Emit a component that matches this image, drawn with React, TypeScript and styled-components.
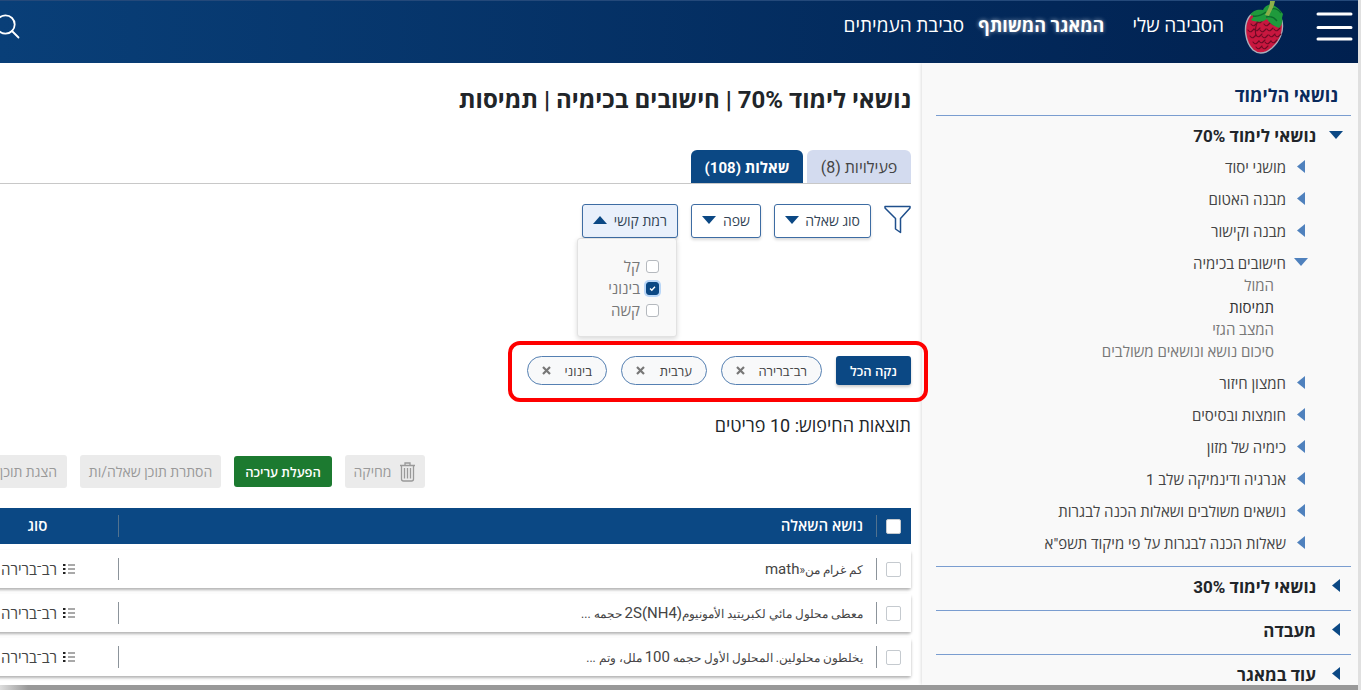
import React from 'react';
import styled, { createGlobalStyle, css } from 'styled-components';

const navy = '#0b4884';
const lineBlue = '#7a9dd0';

const GlobalStyle = createGlobalStyle`
  *, *::before, *::after { box-sizing: border-box; }
  body {
    margin: 0;
    background: #fff;
    color: #212529;
    font-family: Roboto, 'Open Sans', 'Noto Sans', 'Liberation Sans', sans-serif;
    font-size: 14px;
  }
  button, input { font: inherit; margin: 0; }
  h1, h2, p, ul { margin: 0; padding: 0; }
  ul { list-style: none; }
`;

const Frame = styled.div`
  height: 100vh;
  display: flex;
  flex-direction: column;
  overflow: hidden;
  border-right: 3px solid #e0e0e0;
  background: #fff;
`;

const BottomEdge = styled.div`
  flex: none;
  height: 5px;
  margin-right: -3px;
  background: linear-gradient(to right, #ddd, #999 28px);
`;

const Header = styled.header`
  flex: none;
  height: 63px;
  display: flex;
  align-items: flex-start;
  padding-inline-start: 5px;
  background: linear-gradient(to left, #00204f, #093f78);
  border-top: 1px solid #24497a;
`;

const IconButton = styled.button`
  display: block;
  border: 0;
  padding: 0;
  background: none;
  svg { display: block; }
`;

const MenuButton = styled(IconButton)`
  margin-top: 10px;
`;

const SearchButton = styled(IconButton)`
  margin-top: 13px;
  margin-inline-start: auto;
  margin-inline-end: -6px;
`;

const LogoLink = styled.a`
  display: block;
  margin-inline-start: 30px;
  svg { display: block; }
`;

const Nav = styled.nav`
  display: flex;
  margin-top: 11px;
  margin-inline-start: 20px;
`;

const NavLink = styled.a<{ $current?: boolean; $gap?: number }>`
  color: #fff;
  text-decoration: none;
  font-size: 19px;
  line-height: 28px;
  white-space: nowrap;
  margin-inline-end: ${p => p.$gap ?? 0}px;
  ${p => p.$current && css`
    font-size: 18px;
    font-weight: 700;
    text-shadow: 0 0 4px rgba(255, 255, 255, 0.6);
  `}
`;

const Body = styled.div`
  flex: 1;
  min-height: 0;
  display: grid;
  grid-template-columns: 436px minmax(0, 1fr);
  overflow: hidden;
`;

const Sidebar = styled.aside`
  padding: 16px 7px 0 14px;
  background: #f9f9f9;
  box-shadow: 0 0 4px rgba(0, 0, 0, 0.2);
  overflow: hidden;
`;

const SideTitle = styled.h2`
  padding: 1px 13px 3px;
  font-size: 18px;
  line-height: 32px;
  font-weight: 700;
  color: #0a2a5c;
`;

const Group = styled.section`
  border-top: 1px solid ${lineBlue};
`;

const GroupButton = styled.button`
  display: flex;
  align-items: center;
  gap: 13px;
  width: 100%;
  height: 43px;
  padding: 0 8px 4px;
  border: 0;
  background: none;
  font-size: 17px;
  font-weight: 700;
  color: #212529;
`;

const ArrowBox = styled.span`
  flex: none;
  display: flex;
  justify-content: center;
  width: 14px;
  padding-bottom: 2px;
  svg { display: block; }
`;

const TopicList = styled.ul`
  margin-top: -8px;
  padding: 0 43px 7px 0;
`;

const TopicButton = styled.button`
  display: flex;
  align-items: center;
  gap: 8px;
  height: 32px;
  padding: 0;
  border: 0;
  background: none;
  font-size: 15px;
  white-space: nowrap;
  color: #444;
`;

const SubList = styled.ul`
  margin: -4px 34px 4px 0;
`;

const SubItem = styled.li`
  line-height: 22px;
  font-size: 15px;
`;

const SubLink = styled.a<{ $current?: boolean }>`
  color: ${p => (p.$current ? '#333' : '#777')};
  text-decoration: none;
`;

const Main = styled.main`
  min-width: 0;
  padding: 21px 11px 0 0;
`;

const Title = styled.h1`
  font-size: 24px;
  line-height: 32px;
  font-weight: 700;
`;

const Tabs = styled.div`
  display: flex;
  gap: 4px;
  margin-top: 34px;
  border-bottom: 1px solid #c8c8c8;
`;

const Tab = styled.button<{ $active?: boolean; $w: number }>`
  min-width: ${p => p.$w}px;
  height: 33px;
  padding: 0;
  border: 0;
  border-radius: 6px 6px 0 0;
  font-size: ${p => (p.$active ? 15 : 16)}px;
  white-space: nowrap;
  color: ${p => (p.$active ? '#fff' : '#444')};
  font-weight: ${p => (p.$active ? 700 : 400)};
  background: ${p => (p.$active ? navy : '#d3dbef')};
`;

const Filters = styled.div`
  display: flex;
  align-items: flex-start;
  gap: 13px;
  margin-top: 20px;
`;

const FilterSlot = styled.div`
  position: relative;
`;

const FilterButton = styled.button<{ $open?: boolean; $w: number }>`
  display: flex;
  align-items: center;
  justify-content: space-between;
  min-width: ${p => p.$w}px;
  height: 34px;
  padding: 0 10px 2px;
  border: 1px solid #3d6ca3;
  border-radius: 3px;
  font-size: 14px;
  white-space: nowrap;
  color: #345;
  background: ${p => (p.$open ? '#e9f0fb' : '#fff')};
  box-shadow: 0 2px 3px rgba(0, 0, 0, 0.15);
`;

const Menu = styled.div`
  position: absolute;
  top: 100%;
  right: 1px;
  width: 100px;
  padding: 16px 17px 15px;
  background: #f9f9f9;
  border: 1px solid #e2e2e2;
  border-radius: 3px;
  box-shadow: 0 2px 5px rgba(0, 0, 0, 0.15);
`;

const Option = styled.label`
  display: flex;
  align-items: center;
  gap: 6px;
  height: 22px;
  font-size: 15px;
  color: #777;
`;

const CheckBox = styled.input<{ $round?: boolean }>`
  appearance: none;
  flex: none;
  display: block;
  width: ${p => (p.$round ? 13 : 15)}px;
  height: ${p => (p.$round ? 13 : 15)}px;
  border: 1px solid ${p => (p.$round ? '#b5b9be' : '#c5cacf')};
  border-radius: ${p => (p.$round ? 3 : 2)}px;
  background: #fff;
  &:checked {
    border-color: ${navy};
    background: ${navy} url("data:image/svg+xml,%3Csvg xmlns='http://www.w3.org/2000/svg' viewBox='0 0 8 8'%3E%3Cpath fill='none' stroke='%23fff' stroke-width='1.6' d='M1.2 4l2 2 3.6-4'/%3E%3C/svg%3E") center / 7px no-repeat;
    box-shadow: 0 0 0 2px #b9d6f7;
  }
`;

const Chips = styled.div`
  position: relative;
  display: flex;
  gap: 14px;
  width: fit-content;
  margin-top: 118px;
  &::after {
    content: '';
    position: absolute;
    inset: -15px -17px -17px -19px;
    border: 4px solid #fe0000;
    border-radius: 12px;
    pointer-events: none;
  }
`;

const ClearButton = styled.button`
  width: 75px;
  height: 29px;
  padding: 0;
  border: 0;
  border-radius: 3px;
  background: ${navy};
  color: #fff;
  font-size: 13px;
  font-weight: 600;
  box-shadow: 0 2px 3px rgba(0, 0, 0, 0.2);
`;

const Chip = styled.button<{ $w: number }>`
  display: flex;
  align-items: center;
  justify-content: space-between;
  min-width: ${p => p.$w}px;
  height: 29px;
  padding: 0 14px;
  border: 1px solid #5580b2;
  border-radius: 15px;
  background: #f8f9fa;
  color: #444;
  font-size: 13px;
  white-space: nowrap;
`;

const Results = styled.p`
  margin-top: 29px;
  font-size: 18px;
  line-height: 24px;
`;

const Toolbar = styled.div`
  display: flex;
  justify-content: flex-end;
  align-items: center;
  gap: 13px;
  margin-top: 17px;
  margin-inline-end: -69px;
`;

const ToolButton = styled.button<{ $primary?: boolean; $start?: boolean; $w: number }>`
  flex: none;
  display: flex;
  align-items: center;
  justify-content: ${p => (p.$start ? 'flex-start' : 'center')};
  gap: 8px;
  width: ${p => p.$w}px;
  height: ${p => (p.$primary ? 31 : 33)}px;
  padding: 0 ${p => (p.$start ? 10 : 0)}px;
  border: 0;
  border-radius: 3px;
  font-size: ${p => (p.$primary ? 13 : 14)}px;
  white-space: nowrap;
  color: ${p => (p.$primary ? '#fff' : '#999')};
  font-weight: ${p => (p.$primary ? 600 : 400)};
  background: ${p => (p.$primary ? '#1c7a30' : '#ebebeb')};
`;

const Table = styled.table`
  width: calc(100% + 43px);
  margin-top: 14px;
  table-layout: fixed;
  border-collapse: separate;
  border-spacing: 0 6px;
  th, td { padding: 0; text-align: start; }
`;

const HeadRow = styled.tr`
  height: 36px;
  color: #fff;
  background: ${navy};
`;

const Row = styled.tr`
  height: 38px;
  color: #444;
  background: #fff;
  border-radius: 3px;
  box-shadow: 0 2px 3px rgba(0, 0, 0, 0.3);
`;

const Cell = styled.div<{ $head?: boolean; $center?: boolean }>`
  display: flex;
  align-items: center;
  justify-content: ${p => (p.$center ? 'center' : 'flex-start')};
  height: 22px;
  padding-inline-start: ${p => (p.$center ? 0 : 13)}px;
  padding-bottom: ${p => (p.$head ? 2 : 0)}px;
  border-inline-start: 1px solid ${p => (p.$head ? '#52728f' : '#8c949b')};
  font-size: 15px;
  font-weight: ${p => (p.$head ? 600 : 400)};
  white-space: nowrap;
`;

const Question = styled.span`
  font-size: 12px;
`;

const Latin = styled.span`
  font-size: 15px;
`;

const CheckCell = styled.div`
  padding-inline-start: 10px;
`;

const Kind = styled.div`
  display: flex;
  align-items: center;
  gap: 6px;
  height: 22px;
  padding-inline-start: 43px;
  border-inline-start: 1px solid #8c949b;
  font-size: 15px;
  white-space: nowrap;
`;

function Arrow({ dir, color }: { dir: 'left' | 'down' | 'up'; color: string }) {
  if (dir === 'left') {
    return <svg width="8" height="13" viewBox="0 0 8 13"><path d="M8 0v13L0 6.500z" fill={color} /></svg>;
  }
  return (
    <svg width="14" height="8" viewBox="0 0 14 8">
      <path d={dir === 'down' ? 'M0 0h14L7 8z' : 'M0 8h14L7 0z'} fill={color} />
    </svg>
  );
}

const seeds: [number, number][] = [
  [11, 25], [17, 22], [24, 25], [31, 24], [8, 31], [14, 30], [20, 31], [27, 30], [34, 30],
  [10, 37], [16, 36], [22, 37], [29, 36], [35, 36], [13, 43], [19, 42], [25, 43], [31, 42],
  [16, 48], [22, 48],
];

function Raspberry() {
  return (
    <svg width="42" height="54" viewBox="0 0 42 54">
      <path d="M5 16C-1 25 1 41 9 49c6 5 13 3 19-2 8-7 12-17 10-27-3-9-28-13-33-4z" fill="#c8173f" stroke="#a9aebb" strokeWidth="1.400" />
      <g fill="none" stroke="#6d0b25" strokeWidth="1.100" strokeLinecap="round">
        {seeds.map(([x, y]) => (
          <path key={`${x}-${y}`} d={`M${x - 4} ${y - 2}q2 3 4 1t2-2`} />
        ))}
        <path d="M15 18q-5 8-3 17" />
      </g>
      <path d="M6 14c3-5 8-6 13-5 1-3 4-5 8-6 4 2 8 4 12 10l-1 4c1 3 0 7-3 10-5-2-9-4-12-9-5 4-12 3-16 1l3-4z" fill="#1f9a3c" />
      <path d="M22 16c4-1 8 0 11 4M9 15c5 1 9-1 13-4M27 8c4-1 7 0 10 4" fill="none" stroke="#0b6a2b" strokeWidth="1.300" />
      <path d="M21 14c2-4 5-8 5-14h5c-1 6-4 10-6 15z" fill="#8cae4a" />
    </svg>
  );
}

function Funnel() {
  return (
    <svg width="27" height="30" viewBox="0 0 27 30" fill="none" stroke="#1f4f8c" strokeWidth="1.500" strokeLinejoin="round">
      <path d="M1 2.500h25v1.500L16.500 14.500v14l-5-3.500V14.500L1 4z" />
    </svg>
  );
}

function Trash() {
  return (
    <svg width="17" height="20" viewBox="0 0 17 20" fill="none" stroke="#999" strokeWidth="1.300">
      <path d="M1 3.500h15M6 3V1h5v2M2.500 3.500V17q0 2 2 2h8q2 0 2-2V3.500M5.500 6v10.500M8.500 6v10.500M11.500 6v10.500" />
    </svg>
  );
}

function ListIcon() {
  return (
    <svg width="12" height="12" viewBox="0 0 12 12">
      <path d="M5 2h7M5 6h7M5 10h7" stroke="#555" strokeWidth="1.200" />
      <path d="M0 1h2.500v2H0zM0 5h2.500v2H0zM0 9h2.500v2H0z" fill="#222" />
    </svg>
  );
}

function Cross() {
  return (
    <svg width="9" height="9" viewBox="0 0 9 9" stroke="#777" strokeWidth="2.200">
      <path d="M1 1l7 7M8 1L1 8" />
    </svg>
  );
}

type Topic = { name: string; subs?: string[] };

const topics: Topic[] = [
  { name: 'מושגי יסוד' },
  { name: 'מבנה האטום' },
  { name: 'מבנה וקישור' },
  { name: 'חישובים בכימיה', subs: ['המול', 'תמיסות', 'המצב הגזי', 'סיכום נושא ונושאים משולבים'] },
  { name: 'חמצון חיזור' },
  { name: 'חומצות ובסיסים' },
  { name: 'כימיה של מזון' },
  { name: 'אנרגיה ודינמיקה שלב 1' },
  { name: 'נושאים משולבים ושאלות הכנה לבגרות' },
  { name: 'שאלות הכנה לבגרות על פי מיקוד תשפ"א' },
];

const otherGroups = ['נושאי לימוד 30%', 'מעבדה', 'עוד במאגר'];

const levels = ['קל', 'בינוני', 'קשה'];

const chips = [
  { name: 'רב־ברירה', w: 101 },
  { name: 'ערבית', w: 86 },
  { name: 'בינוני', w: 80 },
];

const questions = [
  { id: 'q1', label: 'كم غرام من', text: <>كم غرام من«<Latin>math</Latin></> },
  { id: 'q2', label: 'معطى محلول مائي', text: <>معطى محلول مائي لكبريتيد الأمونيوم<Latin>(NH4)2S</Latin> حجمه ...</> },
  { id: 'q3', label: 'يخلطون محلولين', text: <>يخلطون محلولين. المحلول الأول حجمه <Latin>100</Latin> ملل، وتم ...</> },
];

export default function App() {
  return (
    <>
      <GlobalStyle />
      <Frame dir="rtl" lang="he">
        <Header>
          <MenuButton type="button" aria-label="תפריט">
            <svg width="37" height="32" viewBox="0 0 37 32" stroke="#fff" strokeWidth="3" strokeLinecap="round">
              <path d="M2 3h33M2 16.500h33M2 28h33" />
            </svg>
          </MenuButton>
          <LogoLink href="#" aria-label="דף הבית"><Raspberry /></LogoLink>
          <Nav>
            <NavLink href="#" $gap={28}>הסביבה שלי</NavLink>
            <NavLink href="#" $gap={14} $current>המאגר המשותף</NavLink>
            <NavLink href="#">סביבת העמיתים</NavLink>
          </Nav>
          <SearchButton type="button" aria-label="חיפוש">
            <svg width="26" height="26" viewBox="0 0 26 26" fill="none" stroke="#fff" strokeWidth="1.800" strokeLinecap="round">
              <circle cx="11.500" cy="10.500" r="9.200" />
              <path d="M18 17l6.500 6.500" />
            </svg>
          </SearchButton>
        </Header>
        <Body>
          <Sidebar>
            <SideTitle>נושאי הלימוד</SideTitle>
            <Group>
              <GroupButton type="button">
                <ArrowBox><Arrow dir="down" color={navy} /></ArrowBox>
                <span>נושאי לימוד 70%</span>
              </GroupButton>
              <TopicList>
                {topics.map(t => (
                  <li key={t.name}>
                    <TopicButton type="button">
                      <ArrowBox><Arrow dir={t.subs ? 'down' : 'left'} color="#4f81bd" /></ArrowBox>
                      <span>{t.name}</span>
                    </TopicButton>
                    {t.subs && (
                      <SubList>
                        {t.subs.map(s => (
                          <SubItem key={s}><SubLink href="#" $current={s === 'תמיסות'}>{s}</SubLink></SubItem>
                        ))}
                      </SubList>
                    )}
                  </li>
                ))}
              </TopicList>
            </Group>
            {otherGroups.map(g => (
              <Group key={g}>
                <GroupButton type="button">
                  <ArrowBox><Arrow dir="left" color={navy} /></ArrowBox>
                  <span>{g}</span>
                </GroupButton>
              </Group>
            ))}
          </Sidebar>
          <Main>
            <Title>נושאי לימוד 70% | חישובים בכימיה | תמיסות</Title>
            <Tabs>
              <Tab type="button" $w={104}>פעילויות (8)</Tab>
              <Tab type="button" $w={112} $active>שאלות (108)</Tab>
            </Tabs>
            <Filters>
              <Funnel />
              <FilterButton type="button" $w={97}>סוג שאלה<Arrow dir="down" color={navy} /></FilterButton>
              <FilterButton type="button" $w={70}>שפה<Arrow dir="down" color={navy} /></FilterButton>
              <FilterSlot>
                <FilterButton type="button" $w={96} $open>רמת קושי<Arrow dir="up" color={navy} /></FilterButton>
                <Menu>
                  {levels.map(l => (
                    <Option key={l}>
                      <CheckBox type="checkbox" $round defaultChecked={l === 'בינוני'} />
                      {l}
                    </Option>
                  ))}
                </Menu>
              </FilterSlot>
            </Filters>
            <Chips>
              <ClearButton type="button">נקה הכל</ClearButton>
              {chips.map(c => (
                <Chip key={c.name} type="button" $w={c.w}>{c.name}<Cross /></Chip>
              ))}
            </Chips>
            <Results>תוצאות החיפוש: 10 פריטים</Results>
            <Toolbar>
              <ToolButton type="button" $w={80}><Trash />מחיקה</ToolButton>
              <ToolButton type="button" $w={98} $primary>הפעלת עריכה</ToolButton>
              <ToolButton type="button" $w={141}>הסתרת תוכן שאלה/ות</ToolButton>
              <ToolButton type="button" $w={136} $start>הצגת תוכן</ToolButton>
            </Toolbar>
            <Table>
              <colgroup>
                <col width="34" />
                <col />
                <col width="162" />
              </colgroup>
              <thead>
                <HeadRow>
                  <th scope="col"><CheckCell><CheckBox type="checkbox" aria-label="בחירת הכל" /></CheckCell></th>
                  <th scope="col"><Cell $head>נושא השאלה</Cell></th>
                  <th scope="col"><Cell $head $center>סוג</Cell></th>
                </HeadRow>
              </thead>
              <tbody>
                {questions.map(q => (
                  <Row key={q.id}>
                    <td><CheckCell><CheckBox type="checkbox" aria-label={q.label} /></CheckCell></td>
                    <td><Cell><Question lang="ar">{q.text}</Question></Cell></td>
                    <td><Kind><ListIcon />רב־ברירה</Kind></td>
                  </Row>
                ))}
              </tbody>
            </Table>
          </Main>
        </Body>
        <BottomEdge />
      </Frame>
    </>
  );
}
